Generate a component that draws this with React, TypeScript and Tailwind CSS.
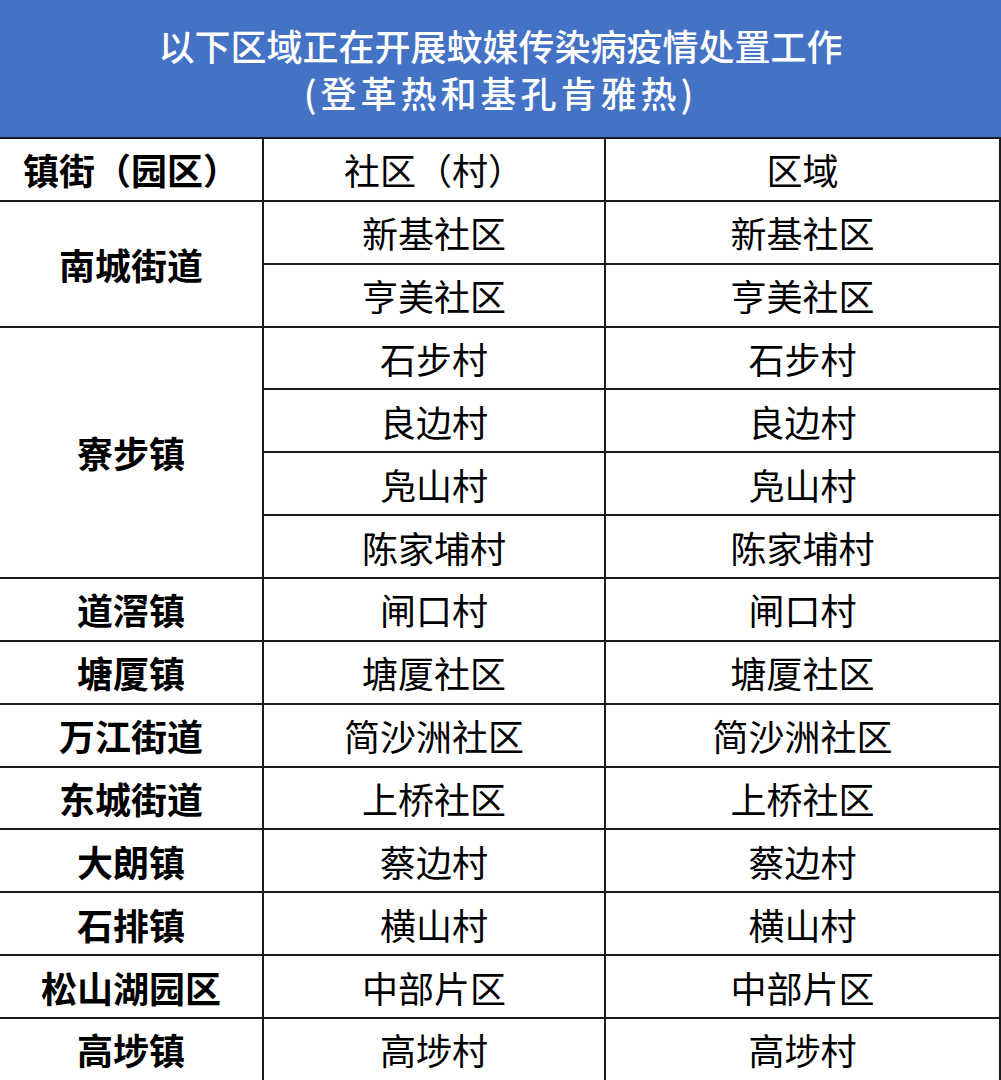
const rows: { town?: string; span?: number; community: string; area: string }[] = [
  { town: "南城街道", span: 2, community: "新基社区", area: "新基社区" },
  { community: "亨美社区", area: "亨美社区" },
  { town: "寮步镇", span: 4, community: "石步村", area: "石步村" },
  { community: "良边村", area: "良边村" },
  { community: "凫山村", area: "凫山村" },
  { community: "陈家埔村", area: "陈家埔村" },
  { town: "道滘镇", span: 1, community: "闸口村", area: "闸口村" },
  { town: "塘厦镇", span: 1, community: "塘厦社区", area: "塘厦社区" },
  { town: "万江街道", span: 1, community: "简沙洲社区", area: "简沙洲社区" },
  { town: "东城街道", span: 1, community: "上桥社区", area: "上桥社区" },
  { town: "大朗镇", span: 1, community: "蔡边村", area: "蔡边村" },
  { town: "石排镇", span: 1, community: "横山村", area: "横山村" },
  { town: "松山湖园区", span: 1, community: "中部片区", area: "中部片区" },
  { town: "高埗镇", span: 1, community: "高埗村", area: "高埗村" },
];

const spanClass: Record<number, string> = {
  1: "row-span-1",
  2: "row-span-2",
  4: "row-span-4",
};

const cell = "flex items-center justify-center border-b-2 border-r-2 border-[#1c1c1c] text-[36px] leading-none text-black";

export default function App() {
  return (
    <div className="w-[1001px] h-[1080px] overflow-hidden bg-white font-['Noto_Sans_CJK_SC','Noto_Sans',sans-serif]">
      {/* Title */}
      <div className="h-[137px] bg-[#4472c4] flex flex-col items-center justify-center text-white text-[36px] leading-[47px] font-medium">
        <div>以下区域正在开展蚊媒传染病疫情处置工作</div>
        <div className="tracking-[4px]">(登革热和基孔肯雅热)</div>
      </div>

      {/* Table */}
      <div className="grid grid-cols-[264px_342px_395px] auto-rows-[62.86px] border-t-2 border-[#1c1c1c]">
        <div className={`${cell} font-bold`}>镇街（园区）</div>
        <div className={cell}>社区（村）</div>
        <div className={cell}>区域</div>

        {rows.map((r) => (
          <div key={r.community} className="contents">
            {r.town && (
              <div className={`${cell} font-bold ${spanClass[r.span ?? 1]}`}>{r.town}</div>
            )}
            <div className={cell}>{r.community}</div>
            <div className={cell}>{r.area}</div>
          </div>
        ))}
      </div>
    </div>
  );
}
